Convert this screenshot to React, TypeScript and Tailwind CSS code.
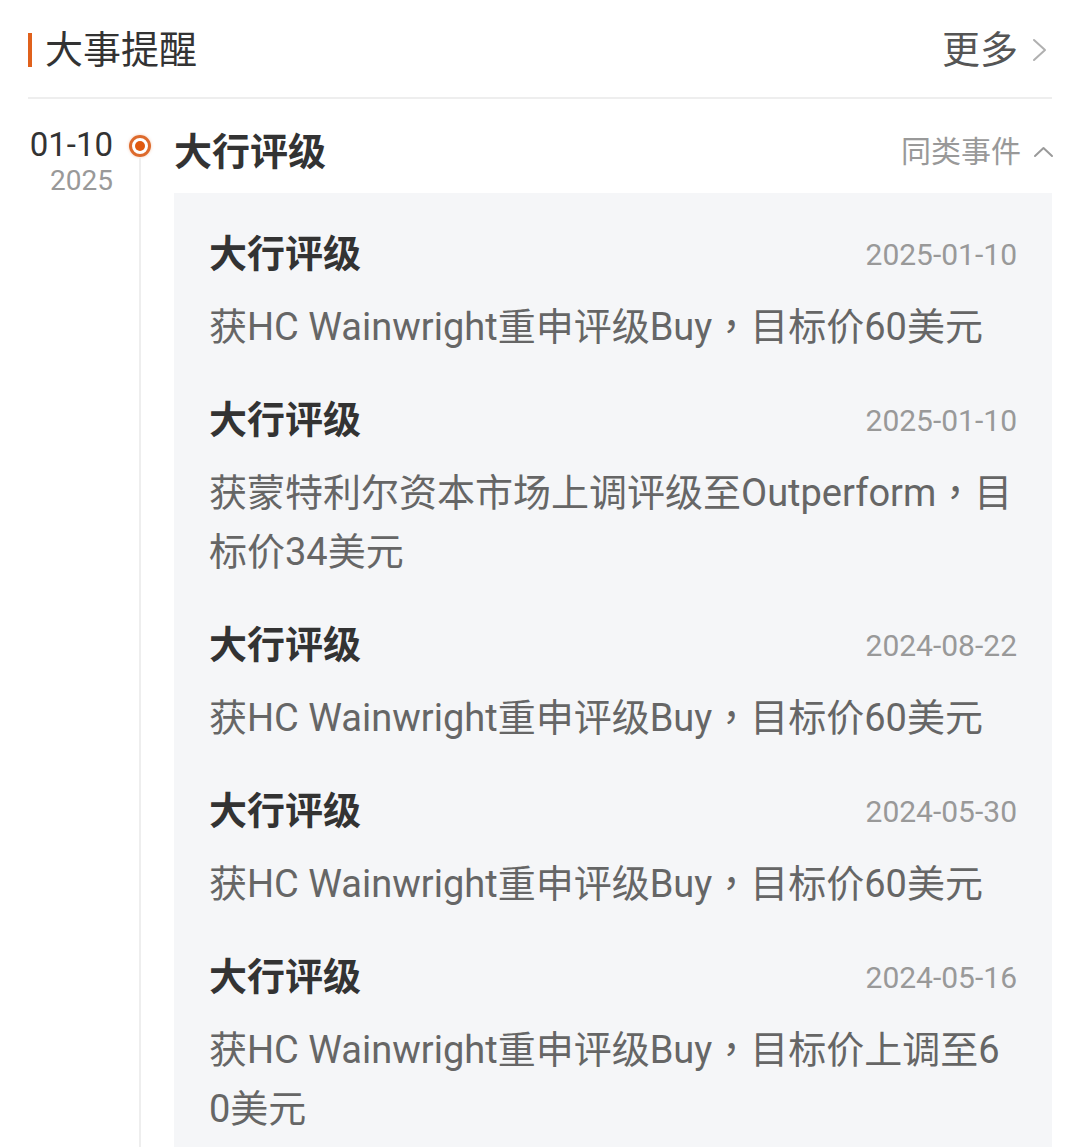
import React from "react";

const items = [
  { date: "2025-01-10", text: ["获HC Wainwright重申评级Buy", "目标价60美元"] },
  { date: "2025-01-10", text: ["获蒙特利尔资本市场上调评级至Outperform", "目标价34美元"] },
  { date: "2024-08-22", text: ["获HC Wainwright重申评级Buy", "目标价60美元"] },
  { date: "2024-05-30", text: ["获HC Wainwright重申评级Buy", "目标价60美元"] },
  { date: "2024-05-16", text: ["获HC Wainwright重申评级Buy", "目标价上调至60美元"] },
];

export default function App() {
  return (
    <div className="h-[1147px] overflow-hidden bg-white px-[28px] pr-[27px] font-['Roboto','Noto_Sans_CJK_SC',sans-serif]">
      {/* Header */}
      <div className="flex h-[99px] items-center justify-between border-b-[2px] border-[#eeeeee]">
        <div className="flex items-center pt-[3px]">
          <div className="h-[34px] w-[4px] bg-[#e0611c]" />
          <span className="ml-[13px] text-[38px] leading-[48px] text-[#333333]">大事提醒</span>
        </div>
        <div className="flex items-center pt-[3px]">
          <span className="text-[38px] leading-[48px] text-[#555555]">更多</span>
          <svg className="ml-[14px] mr-[4px]" width="16" height="24" viewBox="0 0 16 24" fill="none">
            <path d="M2 2 L13 12 L2 22" stroke="#b0b0b0" strokeWidth="2" strokeLinecap="round" strokeLinejoin="round" />
          </svg>
        </div>
      </div>

      {/* Timeline */}
      <div className="flex">
        <div className="w-[85px] shrink-0 pt-[26px] text-right">
          <div className="whitespace-nowrap text-[33px] leading-[40px] text-[#333333]">01-10</div>
          <div className="whitespace-nowrap text-[28px] leading-[32px] text-[#999999]">2025</div>
        </div>
        <div className="flex w-[54px] shrink-0 flex-col items-center pt-[36px]">
          <div className="flex h-[22px] w-[22px] items-center justify-center rounded-full border-[3px] border-[#dd6a2c] shadow-[0_0_3px_rgba(224,97,28,0.35)]">
            <div className="h-[10px] w-[10px] rounded-full bg-[#e0590f]" />
          </div>
          <div className="mt-[1px] w-[2px] flex-1 bg-[#eeeeee]" />
        </div>
        <div className="ml-[7px] min-w-0 flex-1">
          <div className="mt-[22px] flex h-[62px] items-center justify-between">
            <span className="text-[38px] font-bold leading-[48px] text-[#333333]">大行评级</span>
            <div className="flex items-center">
              <span className="text-[30px] leading-[40px] text-[#999999]">同类事件</span>
              <svg className="ml-[12px] mr-[-2px]" width="21" height="12" viewBox="0 0 21 12" fill="none">
                <path d="M2 10 L10.5 2 L19 10" stroke="#9a9a9a" strokeWidth="2" strokeLinecap="round" strokeLinejoin="round" />
              </svg>
            </div>
          </div>
          <div className="mt-[10px] flex flex-col gap-[40px] bg-[#f5f6f8] px-[35px] pb-[40px] pt-[38px]">
            {items.map((it, i) => (
              <div key={i}>
                <div className="flex h-[47px] items-center justify-between">
                  <span className="text-[38px] font-bold leading-[47px] text-[#333333]">大行评级</span>
                  <span className="text-[30px] leading-[40px] text-[#999999]">{it.date}</span>
                </div>
                <div className="mt-[20px] break-all text-[38px] leading-[59px] text-[#666666]">
                  {it.text[0]}
                  <span className="font-['Noto_Sans_CJK_TC',sans-serif] leading-none">，</span>
                  {it.text[1]}
                </div>
              </div>
            ))}
          </div>
        </div>
      </div>
    </div>
  );
}
